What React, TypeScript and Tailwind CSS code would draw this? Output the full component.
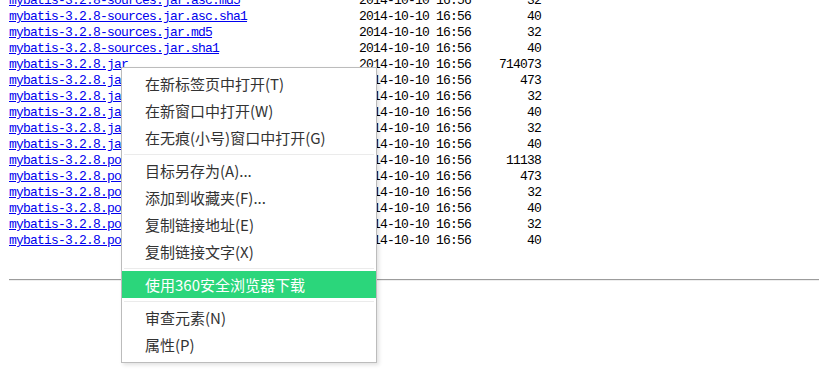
import React from "react";

const rows: [string, string][] = [
  ["mybatis-3.2.8-sources.jar.asc.md5", "32"],
  ["mybatis-3.2.8-sources.jar.asc.sha1", "40"],
  ["mybatis-3.2.8-sources.jar.md5", "32"],
  ["mybatis-3.2.8-sources.jar.sha1", "40"],
  ["mybatis-3.2.8.jar", "714073"],
  ["mybatis-3.2.8.jar.asc", "473"],
  ["mybatis-3.2.8.jar.asc.md5", "32"],
  ["mybatis-3.2.8.jar.asc.sha1", "40"],
  ["mybatis-3.2.8.jar.md5", "32"],
  ["mybatis-3.2.8.jar.sha1", "40"],
  ["mybatis-3.2.8.pom", "11138"],
  ["mybatis-3.2.8.pom.asc", "473"],
  ["mybatis-3.2.8.pom.asc.md5", "32"],
  ["mybatis-3.2.8.pom.asc.sha1", "40"],
  ["mybatis-3.2.8.pom.md5", "32"],
  ["mybatis-3.2.8.pom.sha1", "40"],
];

const Item = ({ label, active }: { label: string; active?: boolean }) => (
  <div
    className={
      "h-[27px] flex items-center pl-[23px] text-[15px] leading-none whitespace-nowrap " +
      (active ? "bg-[#2bd67b] text-white" : "text-[#333333]")
    }
  >
    {label}
  </div>
);

const Sep = () => (
  <div className="h-[6px] pt-[3px] px-[2px]">
    <div className="h-px bg-[#ebebeb]" />
  </div>
);

export default function App() {
  return (
    <div className="relative h-[377px] w-[819px] overflow-hidden bg-white">
      <pre
        className="-mt-[7px] pl-[9px] text-[13px] leading-[16px] tracking-[-0.8px] text-black"
        style={{ fontFamily: '"Liberation Mono", monospace' }}
      >
        {rows.map(([name, size]) => (
          <div key={name} className="h-[16px] whitespace-pre">
            <a className="text-[#0000ee] underline" href="#">
              {name}
            </a>
            {" ".repeat(50 - name.length)}
            {"2014-10-10 16:56"}
            {size.padStart(10, " ")}
          </div>
        ))}
      </pre>
      <div className="mt-[30px] ml-[9px] border-t border-t-[#9c9c9c] border-b border-b-[#eeeeee]" />

      <div
        className="absolute left-[121px] top-[67px] w-[256px] bg-white border border-[#bcbcbc] pt-[2px] pb-[4px] shadow-[2px_2px_4px_rgba(0,0,0,0.12)]"
        style={{ fontFamily: '"Noto Sans CJK SC", "Noto Sans", sans-serif' }}
      >
        <Item label="在新标签页中打开(T)" />
        <Item label="在新窗口中打开(W)" />
        <Item label="在无痕(小号)窗口中打开(G)" />
        <Sep />
        <Item label="目标另存为(A)..." />
        <Item label="添加到收藏夹(F)..." />
        <Item label="复制链接地址(E)" />
        <Item label="复制链接文字(X)" />
        <Sep />
        <Item label="使用360安全浏览器下载" active />
        <Sep />
        <Item label="审查元素(N)" />
        <Item label="属性(P)" />
      </div>
    </div>
  );
}
